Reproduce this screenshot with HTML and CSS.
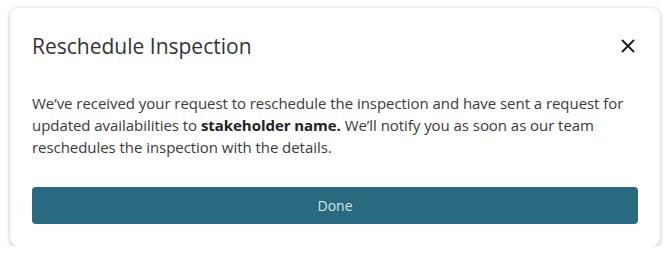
FILE: index.html
```html
<!DOCTYPE html>
<html>
<head>
<meta charset="utf-8">
<link rel="stylesheet" href="styles.css">
</head>
<body>
<div class="card">
  <div class="header">
    <h1 class="title">Reschedule Inspection</h1>
    <button class="close" aria-label="Close">
      <svg width="14" height="14" viewBox="0 0 14 14"><path d="M1.5 1.5 L12.5 12.5 M12.5 1.5 L1.5 12.5" stroke="#222" stroke-width="2" stroke-linecap="round"/></svg>
    </button>
  </div>
  <p class="message">We’ve received your request to reschedule the inspection and have sent a request for updated availabilities to <strong>stakeholder name.</strong> We’ll notify you as soon as our team reschedules the inspection with the details.</p>
  <button class="done">Done</button>
</div>
</body>
</html>
```
FILE: styles.css
```css
html, body {
  margin: 0;
  padding: 0;
  background: #ffffff;
}
body {
  font-family: "Open Sans", "Noto Sans", sans-serif;
  color: #333333;
}
.card {
  margin: 8px 10px 0;
  width: 650px;
  height: 238px;
  box-sizing: border-box;
  padding: 26px 22px 22px;
  border-radius: 8px;
  background: #fff;
  box-shadow: 0 1px 4px rgba(0,0,0,0.28);
  display: flex;
  flex-direction: column;
}
.header {
  display: flex;
  justify-content: space-between;
  align-items: center;
  height: 24px;
}
.title {
  margin: 0;
  font-size: 21px;
  font-weight: 400;
  line-height: 24px;
  color: #333;
}
.close {
  border: 0;
  background: none;
  padding: 0;
  margin-right: 3px;
  width: 14px;
  height: 14px;
  display: flex;
}
.message {
  margin: 34px 0 0;
  font-size: 15px;
  letter-spacing: -0.05px;
  line-height: 22px;
  color: #3a3a3a;
}
.message strong {
  font-weight: 700;
  color: #222;
}
.done {
  margin-top: auto;
  height: 37px;
  width: 100%;
  border: 0;
  border-radius: 4px;
  background: #2a6a80;
  color: #d6e4e9;
  font-family: "Open Sans", "Noto Sans", sans-serif;
  font-size: 14px;
}
```
